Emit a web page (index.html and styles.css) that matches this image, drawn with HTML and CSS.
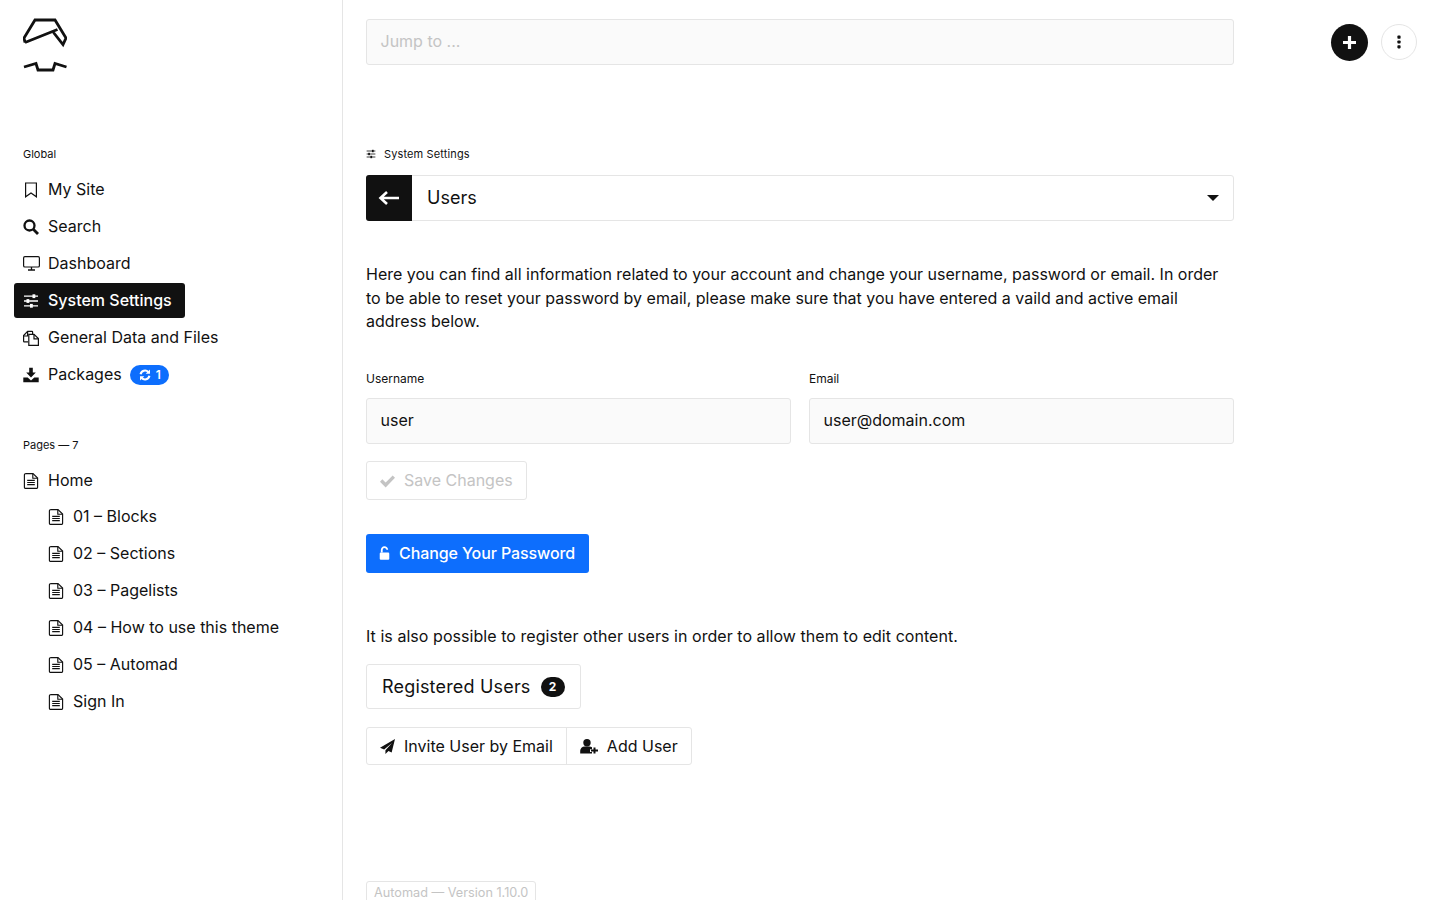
FILE: index.html
```html
<!DOCTYPE html>
<html lang="en">
<head>
<meta charset="utf-8">
<title>System Settings — Users</title>
<link rel="stylesheet" href="styles.css">
</head>
<body>
<svg class="defs" width="0" height="0" aria-hidden="true">
  <symbol id="i-sliders" viewBox="0 0 16 16"><path d="M1 3.200h14M1 8h14M1 12.800h14" fill="none" stroke="currentColor" stroke-width="1.300"/><rect x="9.500" y="1.300" width="2.800" height="3.800" fill="currentColor"/><rect x="3.500" y="6.100" width="2.800" height="3.800" fill="currentColor"/><rect x="7" y="10.900" width="2.800" height="3.800" fill="currentColor"/></symbol>
  <symbol id="i-page" viewBox="0 0 16 16"><path d="M2.300.6H10L14.600 5V14.200a1.200 1.200 0 0 1-1.200 1.200H2.600a1.200 1.200 0 0 1-1.200-1.200V1.800A1.200 1.200 0 0 1 2.600.6Z" fill="none" stroke="currentColor" stroke-width="1.150"/><path d="M9.800.8v4.400h4.600" fill="none" stroke="currentColor" stroke-width="1.150"/><path d="M4.200 7.400h7.600M4.200 9.500h7.600M4.200 11.600h7.600" stroke="currentColor" stroke-width="1.150"/></symbol>
</svg>
<div class="app">
  <aside class="sidebar">
    <svg class="logo" viewBox="0 0 44 56" width="44" height="56" aria-label="Automad logo">
      <path d="M2 24.500 34.500 11.500M30.500 14.500 40 26.500 43 20 32 2H12L1 20l1 4.500" fill="none" stroke="#111" stroke-width="2.800"/>
      <path d="M1 49 13 45.500 15 52H30L32 45.500 43.500 49" fill="none" stroke="#111" stroke-width="2.800"/>
    </svg>
    <div class="side-label first">Global</div>
    <nav class="nav">
      <a class="nav-item"><svg class="ico" viewBox="0 0 16 16"><path d="M2.600 1h10.800v13.800L8 11 2.600 14.800Z" fill="none" stroke="currentColor" stroke-width="1.200"/></svg>My Site</a>
      <a class="nav-item"><svg class="ico" viewBox="0 0 16 16"><circle cx="6.500" cy="6.500" r="5" fill="none" stroke="currentColor" stroke-width="2.300"/><path d="M10.300 10.300 15 15" stroke="currentColor" stroke-width="2.800"/></svg>Search</a>
      <a class="nav-item"><svg class="ico ico-wide" viewBox="0 0 17 15"><rect x=".6" y=".6" width="15.800" height="10.400" rx="1.300" fill="none" stroke="currentColor" stroke-width="1.200"/><path d="M8.500 11v2.600M5 14h7" stroke="currentColor" stroke-width="1.300"/></svg>Dashboard</a>
      <a class="nav-item active"><svg class="ico"><use href="#i-sliders"/></svg>System Settings</a>
      <a class="nav-item"><svg class="ico" viewBox="0 0 16 16"><path d="M5 11.800H1.200a.6.6 0 0 1-.6-.6V5.600L4.600 1.400H9a.6.6 0 0 1 .6.600V4" fill="none" stroke="currentColor" stroke-width="1.200"/><path d="M.8 6H4.600V1.600" fill="none" stroke="currentColor" stroke-width="1.200"/><path d="M5.800 4.400H11l4.400 4.200V15.400H5.800Z" fill="none" stroke="currentColor" stroke-width="1.200"/><path d="M11 4.600V8.800h4.200" fill="none" stroke="currentColor" stroke-width="1.200"/></svg>General Data and Files</a>
      <a class="nav-item"><svg class="ico" viewBox="0 0 16 16"><path d="M6.200.8h3.600v4.800h3L8 10.400 3.200 5.600h3Z" fill="currentColor"/><path d="M.3 10.400h4.400L8 13.500l3.300-3.100h4.400v4.800H.3Z" fill="currentColor"/></svg>Packages<span class="pill"><svg class="pill-ico" viewBox="0 0 12 12"><path d="M1.600 5.200A4.500 4.500 0 0 1 9.300 3M10.400 6.800A4.500 4.500 0 0 1 2.700 9" fill="none" stroke="currentColor" stroke-width="2.100"/><path d="M11 .5v4.300H6.700ZM1 11.500V7.200h4.300Z" fill="currentColor"/></svg>1</span></a>
    </nav>
    <div class="side-label">Pages — 7</div>
    <nav class="nav">
      <a class="nav-item"><svg class="ico"><use href="#i-page"/></svg>Home</a>
      <div class="nav-sub">
        <a class="nav-item"><svg class="ico"><use href="#i-page"/></svg>01 – Blocks</a>
        <a class="nav-item"><svg class="ico"><use href="#i-page"/></svg>02 – Sections</a>
        <a class="nav-item"><svg class="ico"><use href="#i-page"/></svg>03 – Pagelists</a>
        <a class="nav-item"><svg class="ico"><use href="#i-page"/></svg>04 – How to use this theme</a>
        <a class="nav-item"><svg class="ico"><use href="#i-page"/></svg>05 – Automad</a>
        <a class="nav-item"><svg class="ico"><use href="#i-page"/></svg>Sign In</a>
      </div>
    </nav>
  </aside>
  <main class="main">
    <div class="content">
      <div class="jump">Jump to ...</div>
      <div class="crumb"><svg class="crumb-ico"><use href="#i-sliders"/></svg>System Settings</div>
      <div class="switcher">
        <span class="back"><svg viewBox="0 0 22 16" width="22" height="16"><path d="M21 8H3M9 2 2.500 8 9 14" fill="none" stroke="#fff" stroke-width="2.600"/></svg></span>
        <span class="switcher-title">Users</span>
        <span class="caret"></span>
      </div>
      <p class="lead">Here you can find all information related to your account and change your username, password or email. In order to be able to reset your password by email, please make sure that you have entered a vaild and active email address below.</p>
      <div class="fields">
        <div class="field"><label class="field-label">Username</label><div class="input">user</div></div>
        <div class="field"><label class="field-label">Email</label><div class="input">user@domain.com</div></div>
      </div>
      <div class="btn btn-disabled"><svg class="btn-ico" viewBox="0 0 16 16"><path d="M1.200 8 6 12.800 14.800 3.800" fill="none" stroke="currentColor" stroke-width="3.600"/></svg>Save Changes</div>
      <div class="btn btn-primary"><svg class="lock" viewBox="0 0 12 16"><path d="M3 7V4.200a3 3 0 0 1 6-.2" fill="none" stroke="currentColor" stroke-width="2"/><rect x=".8" y="7" width="10.400" height="7.800" rx="1.200" fill="currentColor"/></svg>Change Your Password</div>
      <p class="lead second">It is also possible to register other users in order to allow them to edit content.</p>
      <div class="registered">Registered Users<span class="count">2</span></div>
      <div class="group">
        <span class="group-btn"><svg class="btn-ico dark" viewBox="0 0 16 16"><path d="M16 0 0 9.400 4.400 11.200 12.800 4.200 5.800 12v4L9 12.900l3.400 1.400Z" fill="currentColor"/></svg>Invite User by Email</span>
        <span class="group-btn"><svg class="btn-ico dark wide" viewBox="0 0 18 15"><circle cx="7" cy="3.800" r="3.700" fill="currentColor"/><path d="M.2 14.500v-2.700a4.400 4.400 0 0 1 4.400-4.400h4.800a4.400 4.400 0 0 1 2.600.9v1.900h-2v2.800h2v1.500Z" fill="currentColor"/><path d="M14.500 8.500v6M11 11.500h7" stroke="currentColor" stroke-width="2"/></svg>Add User</span>
      </div>
      <div class="version">Automad — Version 1.10.0</div>
    </div>
    <div class="top-actions">
      <span class="round round-dark"><svg viewBox="0 0 13 13" width="13" height="13"><path d="M6.500 0v13M0 6.500h13" stroke="#fff" stroke-width="3.200"/></svg></span>
      <span class="round round-light"><svg viewBox="0 0 4 14" width="4" height="14"><rect x=".4" y=".6" width="3.200" height="3.200" rx=".8" fill="#111"/><rect x=".4" y="5.400" width="3.200" height="3.200" rx=".8" fill="#111"/><rect x=".4" y="10.200" width="3.200" height="3.200" rx=".8" fill="#111"/></svg></span>
    </div>
  </main>
</div>
</body>
</html>
```

FILE: styles.css
```css
* { box-sizing: border-box; }
html, body { margin: 0; height: 100%; overflow: hidden; }
body { font-family: Inter, "Liberation Sans", sans-serif; font-size: 16px; color: #111; background: #fff; }
.defs { position: absolute; }
.app { display: flex; height: 900px; overflow: hidden; }

.sidebar { flex: 0 0 343px; border-right: 1px solid #e5e5e5; padding: 18px 14px 0; display: flex; flex-direction: column; }
.logo { display: block; margin-left: 9px; flex: none; }
.side-label { font-size: 11px; line-height: 14px; padding-left: 9px; margin-top: 46px; margin-bottom: 11px; }
.side-label.first { margin-top: 73px; margin-bottom: 11px; height: 14px; }
.nav { display: flex; flex-direction: column; gap: 2px; align-items: flex-start; }
.nav-sub { display: flex; flex-direction: column; gap: 2px; padding-left: 25px; margin-top: -1px; }
.nav-item { display: flex; align-items: center; height: 35px; padding: 0 13px 2px 9px; border-radius: 3px; white-space: nowrap; }
.nav-item.active { background: #111; color: #fff; font-weight: 500; }
.ico { width: 16px; height: 16px; margin: 2px 9px 0 0; flex: none; }
.ico-wide { width: 17px; height: 15px; margin-right: 8px; }
.pill { display: inline-flex; align-items: center; height: 20px; margin: 2px 0 0 8px; padding: 0 8.500px 0 9px; border-radius: 10px; background: #0d6efd; color: #fff; font-size: 12px; font-weight: 600; }
.pill-ico { width: 12px; height: 12px; margin-right: 5px; }

.main { flex: 1; display: flex; padding: 19px 23px 0; justify-content: space-between; min-width: 0; }
.content { width: 868px; flex: none; }
.jump { height: 46px; border: 1px solid #e5e5e5; border-radius: 3px; background: #fafafa; color: #c4c4c4; padding: 0 14px 2px 13.500px; display: flex; align-items: center; }
.crumb { display: flex; align-items: center; font-size: 11px; line-height: 14px; margin-top: 82px; letter-spacing: .13px; }
.crumb-ico { width: 10px; height: 10px; margin-right: 8px; }
.switcher { display: flex; align-items: center; height: 46px; margin-top: 14px; border: 1px solid #e5e5e5; border-radius: 3px; }
.back { flex: 0 0 46px; height: 46px; margin-left: -1px; background: #111; border-radius: 3px 0 0 3px; display: flex; align-items: center; justify-content: center; }
.switcher-title { font-size: 18px; margin-left: 15px; padding-bottom: 2px; flex: 1; }
.caret { width: 0; height: 0; margin-right: 14px; border-left: 6px solid transparent; border-right: 6px solid transparent; border-top: 6px solid #111; }
.lead { margin: 0; line-height: 23.500px; margin-top: 42px; }
.lead.second { margin-top: 52px; letter-spacing: .05px; }
.fields { display: grid; grid-template-columns: 1fr 1fr; gap: 18px; margin-top: 38px; }
.field-label { display: block; font-size: 12px; line-height: 14px; margin-bottom: 12px; }
.input { height: 46px; border: 1px solid #e5e5e5; border-radius: 3px; background: #fafafa; padding: 0 14px 1px 13.500px; display: flex; align-items: center; }
.btn { display: flex; align-items: center; width: max-content; height: 39px; border-radius: 3px; padding: 0 13px; }
.btn-disabled { margin-top: 17px; border: 1px solid #e5e5e5; color: #c4c4c4; }
.btn-primary { margin-top: 34px; background: #0d6efd; color: #fff; font-weight: 500; padding: 0 14px 0 13px; letter-spacing: -.1px; }
.btn-ico { width: 15px; height: 15px; margin-right: 9px; flex: none; }
.btn-ico.dark { color: #111; }
.btn-ico.wide { width: 18px; height: 15px; margin-right: 9px; }
.lock { width: 11px; height: 15px; margin-right: 9px; }
.registered { display: flex; align-items: center; width: max-content; height: 45px; margin-top: 16px; padding: 0 15px; border: 1px solid #e5e5e5; border-radius: 3px; font-size: 18px; letter-spacing: .18px; }
.count { display: inline-flex; align-items: center; justify-content: center; width: 24px; height: 20px; margin-left: 10px; border-radius: 10px; background: #111; color: #fff; font-size: 12px; font-weight: 700; letter-spacing: 0; }
.group { display: flex; width: max-content; margin-top: 18px; border: 1px solid #e5e5e5; border-radius: 3px; }
.group-btn { display: flex; align-items: center; height: 36px; padding: 0 13px; }
.group-btn + .group-btn { border-left: 1px solid #e5e5e5; }
.version { width: max-content; margin-top: 116px; height: 30px; padding: 2px 7px 0; border: 1px solid #e5e5e5; border-radius: 3px; font-size: 12.700px; color: #c4c4c4; line-height: 18px; }

.top-actions { display: flex; gap: 13px; padding-top: 5px; align-items: flex-start; }
.round { width: 37px; height: 37px; border-radius: 50%; display: flex; align-items: center; justify-content: center; }
.round-dark { background: #111; }
.round-light { width: 36px; height: 36px; border: 1px solid #e5e5e5; }
```
